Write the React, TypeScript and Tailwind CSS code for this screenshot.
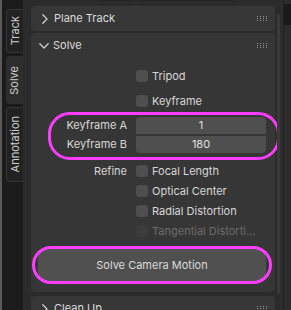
import React from "react";

const Chevron = ({ down }: { down?: boolean }) =>
  down ? (
    <svg width="10" height="6" viewBox="0 0 10 6" className="shrink-0">
      <path d="M0.8 0.8 L5 5 L9.2 0.8" fill="none" stroke="#cfcfcf" strokeWidth="1.3" strokeLinecap="round" strokeLinejoin="round" />
    </svg>
  ) : (
    <svg width="6" height="10" viewBox="0 0 6 10" className="shrink-0">
      <path d="M0.8 0.8 L5 5 L0.8 9.2" fill="none" stroke="#cfcfcf" strokeWidth="1.3" strokeLinecap="round" strokeLinejoin="round" />
    </svg>
  );

const Grip = () => (
  <svg width="11" height="6" viewBox="0 0 11 6" className="shrink-0">
    {[0, 1, 2].map((r) =>
      [0, 1, 2, 3].map((c) => (
        <rect key={`${r}-${c}`} x={c * 3} y={r * 2} width="1" height="1" fill="#9a9a9a" />
      ))
    )}
  </svg>
);

const Check = ({ label, dim }: { label: string; dim?: boolean }) => (
  <div className="flex items-center h-[20px] gap-[4px] shrink-0">
    <div className={`w-[12px] h-[12px] rounded-[3px] shrink-0 ${dim ? "bg-[#3c3c3c]" : "bg-[#4f4f4f]"}`} />
    <span className={dim ? "text-[#6c6c6c]" : "text-[#d8d8d8]"}>{label}</span>
  </div>
);

const Tab = ({ label, h, active }: { label: string; h: number; active?: boolean }) => (
  <div
    className={`shrink-0 flex items-center justify-center rounded-l-[4px] ${
      active ? "bg-[#2d2d2d]" : "bg-[#222222] border border-r-0 border-[#363636]"
    }`}
    style={{ height: h }}
  >
    <span className="[writing-mode:vertical-rl] rotate-180 text-[11px] text-[#cfcfcf] leading-none">{label}</span>
  </div>
);

export default function App() {
  return (
    <div className="w-[291px] h-[310px] flex bg-[#2b2b2b] overflow-hidden font-['Inter',sans-serif] text-[11px] leading-none">
      <div className="w-[2px] shrink-0 bg-[#5a5a5a]" />
      <div className="w-[21px] shrink-0 bg-[#1b1b1b] flex flex-col pl-[4px] pt-[9px] gap-[3px]">
        <Tab label="Track" h={44} />
        <Tab label="Solve" h={48} active />
        <Tab label="Annotation" h={75} />
      </div>
      <div className="relative w-[260px] shrink-0 flex flex-col pl-[8px] pr-[8px]">
        <div className="flex h-[2px] shrink-0">
          <div className="ml-[69px] w-[32px] h-[1px] bg-[#232323]" />
          <div className="ml-[8px] w-[94px] h-[1px] bg-[#232323]" />
        </div>
        {/* Plane Track */}
        <div className="shrink-0 mt-[4px] h-[25px] rounded-[4px] bg-[#373737] flex items-center pl-[11px] pr-[7px]">
          <Chevron />
          <span className="ml-[6px] text-[#dcdcdc]">Plane Track</span>
          <div className="flex-1" />
          <Grip />
        </div>
        {/* Solve */}
        <div className="shrink-0 relative mt-[2px] rounded-[4px] bg-[#363636] flex flex-col">
          <div className="shrink-0 h-[25px] flex items-center pl-[8px] pr-[7px]">
            <Chevron down />
            <span className="ml-[4px] text-[#dcdcdc]">Solve</span>
            <div className="flex-1" />
            <Grip />
          </div>
          <div className="flex flex-col pt-[8px] pb-[11px]">
            <div className="pl-[105px] shrink-0">
              <Check label="Tripod" />
            </div>
            <div className="pl-[105px] mt-[5px] shrink-0">
              <Check label="Keyframe" />
            </div>
            <div className="flex flex-col gap-[2px] mt-[6px] shrink-0">
              <div className="flex items-center h-[17px]">
                <div className="w-[105px] pr-[9px] text-right text-[#d8d8d8]">Keyframe A</div>
                <div className="w-[130px] h-[17px] bg-[#4f4f4f] rounded-t-[4px] flex items-center justify-center text-[#e0e0e0]">1</div>
              </div>
              <div className="flex items-center h-[17px]">
                <div className="w-[105px] pr-[9px] text-right text-[#d8d8d8]">Keyframe B</div>
                <div className="w-[130px] h-[17px] bg-[#4f4f4f] rounded-b-[4px] flex items-center justify-center text-[#e0e0e0]">180</div>
              </div>
            </div>
            <div className="flex mt-[8px] shrink-0">
              <div className="w-[105px] pr-[9px] h-[20px] flex items-center justify-end text-[#d8d8d8]">Refine</div>
              <div className="flex flex-col">
                <Check label="Focal Length" />
                <Check label="Optical Center" />
                <Check label="Radial Distortion" />
                <Check label="Tangential Distorti..." dim />
              </div>
            </div>
            <div className="shrink-0 mt-[8px] ml-[7px] mr-[9px] h-[32px] rounded-[5px] bg-[#505050] flex items-center justify-center text-[#dcdcdc]">
              Solve Camera Motion
            </div>
          </div>
          <div className="absolute left-[17px] top-[79px] w-[232px] h-[48px] rounded-[22px] border-[3px] border-[#ff3dff]" />
          <div className="absolute left-[1px] top-[213px] w-[240px] h-[38px] rounded-[19px] border-[3px] border-[#ff3dff]" />
        </div>
        {/* Clean Up */}
        <div className="shrink-0 mt-[4px] h-[25px] rounded-[4px] bg-[#373737] flex items-center pl-[11px] pr-[7px]">
          <Chevron />
          <span className="ml-[6px] text-[#dcdcdc]">Clean Up</span>
          <div className="flex-1" />
          <Grip />
        </div>
        <div className="absolute right-[3px] top-[14px] bottom-[16px] w-[3px] rounded-full bg-[#3a3a3a]" />
      </div>
      <div className="flex-1 flex flex-col border-l border-[#232323] bg-[#2c2c2c]">
        <div className="mt-[4px] h-[21px] bg-[#1a1a1a]" />
      </div>
    </div>
  );
}
